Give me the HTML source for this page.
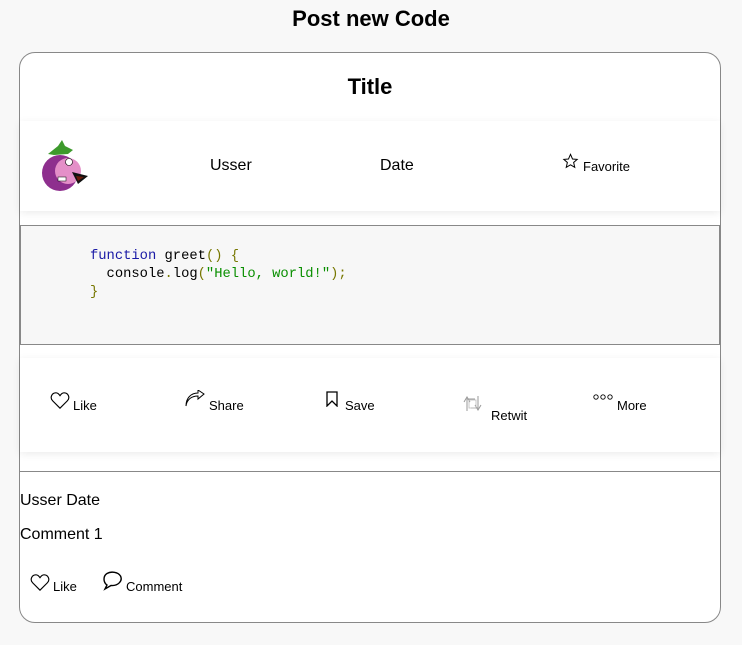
<!DOCTYPE html>
<html><head><style>
body{margin:0;background:#f8f8f8;font-family:"Liberation Sans",Arial,sans-serif;width:742px;height:645px;position:relative;overflow:hidden}
.a{position:absolute;white-space:nowrap}
.card{position:absolute;left:19px;top:52px;width:700px;height:569px;border:1px solid #888;border-radius:16px;background:#fff}
.box{position:absolute;left:20px;width:700px;background:#fff;box-shadow:0 2px 8px rgba(0,0,0,.08)}
.code{position:absolute;left:20px;top:225px;width:698px;height:118px;background:#f7f7f7;border:1px solid #888}
pre{margin:0;font-family:"Liberation Mono",monospace;font-size:13.8px;line-height:18px}
.s{font-size:13px}
svg{position:absolute}
</style></head><body>
<div class="a" style="left:0;width:742px;text-align:center;top:6px;font-size:22px;font-weight:bold">Post new Code</div>
<div class="card"></div>
<div class="a" style="left:19px;width:702px;text-align:center;top:74px;font-size:22px;font-weight:bold">Title</div>
<div class="box" style="top:121px;height:90px"></div>
<svg style="left:40px;top:140px" width="50" height="52" viewBox="0 0 50 52">
<ellipse cx="20" cy="33" rx="18" ry="18" fill="#8e2f8e"/>
<path d="M8 14 L18 6 L22 0 L25 6 L33 10 L28 14 L14 15Z" fill="#3d9a2c"/>
<ellipse cx="28" cy="31" rx="13" ry="13" fill="#e48fc8"/>
<path d="M32 32 L48 36 L38 44Z" fill="#111"/>
<path d="M36 36 L44 37 L38 41Z" fill="#6b1a0a"/>
<circle cx="29" cy="22" r="3.5" fill="#fff" stroke="#000" stroke-width=".6"/>
<rect x="18" y="37" width="8" height="4" fill="#fff" stroke="#000" stroke-width=".5"/>
</svg>
<div class="a" style="left:210px;top:157px;font-size:16px">Usser</div>
<div class="a" style="left:380px;top:157px;font-size:16px">Date</div>
<svg style="left:562px;top:153px" width="17" height="16" viewBox="0 0 24 24"><path d="M12 2l3 7 7 .6-5.3 4.6 1.7 7.3L12 17.8 5.6 21.5l1.7-7.3L2 9.6 9 9z" fill="none" stroke="#000" stroke-width="1.5"/></svg>
<div class="a s" style="left:583px;top:159px">Favorite</div>
<div class="code"><pre style="position:absolute;left:69px;top:22px"><span style="color:#1a1aa6">function</span> greet<span style="color:#777700">()</span> <span style="color:#777700">{</span>
  console<span style="color:#777700">.</span>log<span style="color:#777700">(</span><span style="color:#098f00">"Hello, world!"</span><span style="color:#777700">);</span>
<span style="color:#777700">}</span></pre></div>
<div class="box" style="top:358px;height:94px"></div>
<svg style="left:50px;top:392px" width="20" height="17" viewBox="0 0 24 21"><path d="M12 20 L3 11 C-1 7 2 1 7 1 C9.5 1 11 3 12 4.5 C13 3 14.5 1 17 1 C22 1 25 7 21 11Z" fill="none" stroke="#000" stroke-width="1.4"/></svg>
<div class="a s" style="left:73px;top:398px">Like</div>
<svg style="left:185px;top:390px" width="20" height="17" viewBox="0 0 20 17"><path d="M1 16 C2 9 7 6 13 6 V9 L19 4 L13 0 V3 C6 3 1 8 1 16" fill="none" stroke="#000" stroke-width="1"/></svg>
<div class="a s" style="left:209px;top:398px">Share</div>
<svg style="left:326px;top:391px" width="12" height="16" viewBox="0 0 12 16"><path d="M1 1 H11 V15 L6 10 L1 15Z" fill="none" stroke="#000" stroke-width="1.3"/></svg>
<div class="a s" style="left:345px;top:398px">Save</div>
<svg style="left:462px;top:394px" width="22" height="20" viewBox="0 0 22 20"><path d="M5 17 V5 H13 M2 8 L5 3 L8 8 M16 2 V14 H9 M13 11 L16 16 L19 11" fill="none" stroke="#999" stroke-width="1"/><rect x="7" y="6" width="7" height="8" fill="none" stroke="#bbb" stroke-width=".8"/></svg>
<div class="a s" style="left:491px;top:408px">Retwit</div>
<svg style="left:593px;top:394px" width="22" height="6" viewBox="0 0 22 6"><circle cx="3" cy="3" r="2.2" fill="none" stroke="#000" stroke-width=".9"/><circle cx="10" cy="3" r="2.2" fill="none" stroke="#000" stroke-width=".9"/><circle cx="17" cy="3" r="2.2" fill="none" stroke="#000" stroke-width=".9"/></svg>
<div class="a s" style="left:617px;top:398px">More</div>
<div class="a" style="left:19px;top:471px;width:702px;height:1px;background:#888"></div>
<div class="a" style="left:20px;top:492px;font-size:16px">Usser Date</div>
<div class="a" style="left:20px;top:526px;font-size:16px">Comment 1</div>
<svg style="left:30px;top:574px" width="20" height="17" viewBox="0 0 24 21"><path d="M12 20 L3 11 C-1 7 2 1 7 1 C9.5 1 11 3 12 4.5 C13 3 14.5 1 17 1 C22 1 25 7 21 11Z" fill="none" stroke="#000" stroke-width="1.4"/></svg>
<div class="a s" style="left:53px;top:579px">Like</div>
<svg style="left:101px;top:571px" width="22" height="20" viewBox="0 0 22 20"><path d="M4 18 L6 14 C2 11 2 5 6 2.5 C10 0 17 1 19.5 5 C22 10 17 15 10 14.5 Z" fill="none" stroke="#000" stroke-width="1.4"/></svg>
<div class="a s" style="left:126px;top:579px">Comment</div>
</body></html>
